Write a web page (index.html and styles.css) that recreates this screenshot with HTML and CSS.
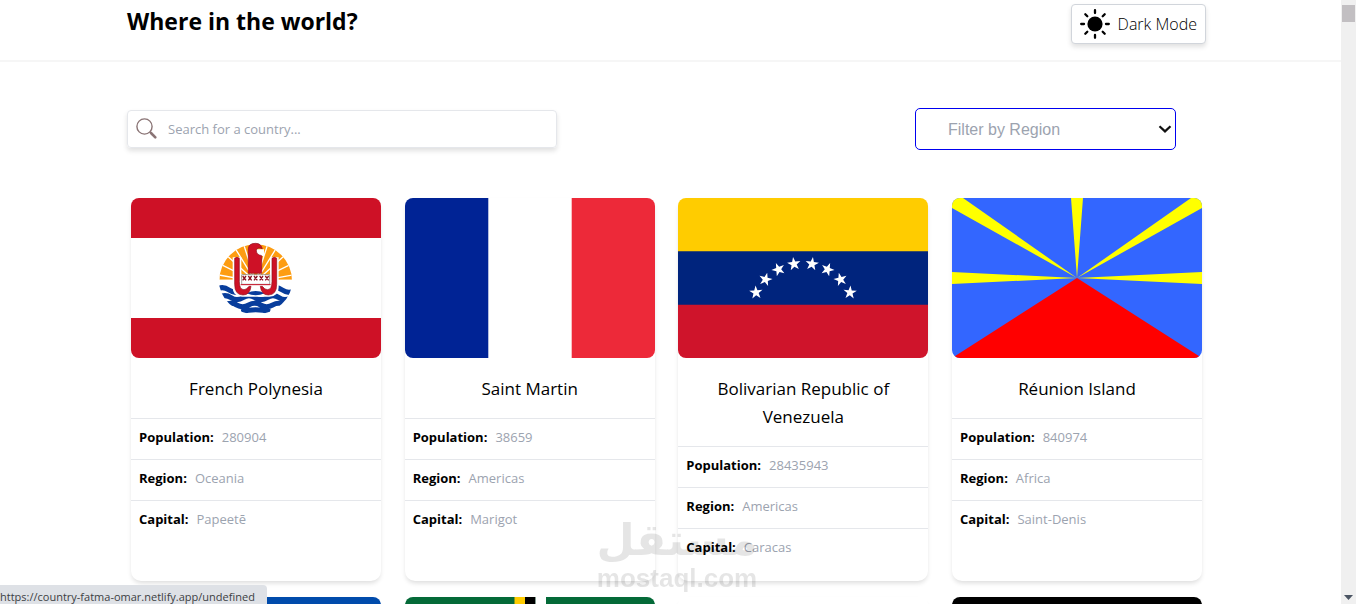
FILE: index.html
```html
<!DOCTYPE html>
<html lang="en">
<head>
    <meta charset="UTF-8">
    <meta name="viewport" content="width=device-width, initial-scale=1.0">
    <title>Where in the world?</title>
    <link rel="stylesheet" href="styles.css">
</head>
<body>
    <div class="page">
        <header class="header">
            <h1 class="header-title">Where in the world?</h1>
            <button class="mode-btn" type="button">
                <svg width="30" height="30" viewBox="0 0 30 30" aria-hidden="true">
                    <circle cx="15" cy="15" r="7.6"/>
                    <path d="M15 1.2v2.8M15 26v2.8M1.2 15H4M26 15h2.8M5.3 5.3l2 2M22.7 22.7l2 2M5.3 24.7l2-2M22.7 7.3l2-2" fill="none" stroke="#000" stroke-width="2.3" stroke-linecap="round"/>
                </svg>
                <span>Dark Mode</span>
            </button>
        </header>

        <main class="main">
            <form class="controls">
                <label class="search">
                    <svg width="22" height="22" viewBox="0 0 22 22" fill="none" stroke="#8a7475" aria-hidden="true">
                        <circle cx="8.5" cy="8.5" r="7.6" stroke-width="1.4"/>
                        <path d="M13.9 13.9l1.3 1.3" stroke-width="1.5"/>
                        <path d="M15 15l4.3 4.3" stroke-width="2.6" stroke-linecap="round"/>
                    </svg>
                    <input type="text" class="search-input" placeholder="Search for a country..." aria-label="Search for a country">
                </label>
                <div class="filter">
                    <select class="filter-select" aria-label="Filter by Region">
                        <option>Filter by Region</option>
                    </select>
                    <svg class="filter-arrow" width="14" height="8" viewBox="0 0 14 8" aria-hidden="true">
                        <path d="M1.5 1.2L7 6.4l5.5-5.2" fill="none" stroke="#111" stroke-width="2.2"/>
                    </svg>
                </div>
            </form>

            <section class="cards">
                <article class="card">
                    <svg class="flag" viewBox="0 0 250 160" preserveAspectRatio="none">
                        <defs>
                            <clipPath id="sunClip"><path d="M58 152a109 109 0 0 1 218 0z"/></clipPath>
                            <clipPath id="seaClip"><path d="M56 148h222a111 105 0 0 1-222 0z"/></clipPath>
                        </defs>
                        <path fill="#fff" d="M0 0h250v160H0z"/>
                        <path fill="#ce1126" d="M0 0h250v40H0zM0 120h250v40H0z"/>
                        <g transform="translate(69 32) scale(.3333)">
                            <g clip-path="url(#sunClip)">
                                <path fill="#fd9d12" d="M50 30h234v125H50z"/>
                                <path stroke="#fff" stroke-width="4" d="M167 155L40 132M167 155L48 96M167 155L62 60M167 155L90 30M167 155L125 25M167 155L209 25M167 155L244 30M167 155L272 60M167 155L286 96M167 155L294 132"/>
                            </g>
                            <g clip-path="url(#seaClip)">
                                <path fill="#fff" d="M50 148h234v110H50z"/>
                                <path fill="none" stroke="#083d9c" stroke-width="15" d="M47 180q20-14 40 0t40 0 40 0 40 0 40 0 40 0M57 203q18-12 36 0t36 0 36 0 36 0 36 0 36 0M74 225q18-10 36 0t36 0 36 0 36 0 36 0M124 245q43-12 86 0"/>
                            </g>
                            <path fill="#fff" d="M98 82h26v72h86V82h26v90q0 28-28 28h-82q-28 0-28-28z"/>
                            <path fill="#083d9c" d="M140 190q27-14 54 0-27 12-54 0z"/>
                            <path fill="#ce1126" stroke="#8c1020" stroke-width="2" d="M104 85q7-6 14 0v70q0 24 14 24 8 0 15-10h6q-3 26-24 26-25 0-25-32zM230 85q-7-6-14 0v70q0 24-14 24-8 0-15-10h-6q3 26 24 26 25 0 25-32z"/>
                            <path fill="#fff" stroke="#777" stroke-width="2" d="M125 134h84v29h-84z"/>
                            <path fill="#fff" d="M166 58h26v20h-26z"/>
                            <path fill="#ce1126" stroke="#8c1020" stroke-width="2" d="M145 130V57q0-17 22-17 16 0 20 16-15-5-18 4-1 14 16 17v53z"/>
                            <path stroke="#8c1020" stroke-width="4" d="M128 138l10 13m0-13l-10 13M145 138l10 13m0-13l-10 13M162 138l10 13m0-13l-10 13M179 138l10 13m0-13l-10 13M196 138l10 13m0-13l-10 13"/>
                            <path stroke="#ce1126" stroke-width="3" d="M122 164h90"/>
                        </g>
                    </svg>
                    <h2 class="card-title">French Polynesia</h2>
                    <p class="card-row"><b>Population:</b><span>280904</span></p>
                    <p class="card-row"><b>Region:</b><span>Oceania</span></p>
                    <p class="card-row"><b>Capital:</b><span>Papeetē</span></p>
                </article>

                <article class="card">
                    <svg class="flag" viewBox="0 0 250 160" preserveAspectRatio="none">
                        <path fill="#fff" d="M0 0h250v160H0z"/>
                        <path fill="#002395" d="M0 0h83.3v160H0z"/>
                        <path fill="#ed2939" d="M166.7 0H250v160h-83.3z"/>
                    </svg>
                    <h2 class="card-title">Saint Martin</h2>
                    <p class="card-row"><b>Population:</b><span>38659</span></p>
                    <p class="card-row"><b>Region:</b><span>Americas</span></p>
                    <p class="card-row"><b>Capital:</b><span>Marigot</span></p>
                </article>

                <article class="card">
                    <svg class="flag" viewBox="0 0 250 160" preserveAspectRatio="none">
                        <defs>
                            <path id="star" fill="#fff" d="M0-7l1.6 4.8h5.1L2.6.8l1.5 4.9L0 2.7l-4.1 3L-2.6.8l-4.1-3h5.1z"/>
                        </defs>
                        <path fill="#fc0" d="M0 0h250v54H0z"/>
                        <path fill="#cf142b" d="M0 106h250v54H0z"/>
                        <path fill="#00247d" d="M0 53.3h250v53.4H0z"/>
                        <use href="#star" transform="translate(78 94.5) rotate(-4)"/>
                        <use href="#star" transform="translate(87.5 81.5) rotate(14)"/>
                        <use href="#star" transform="translate(100.5 71.5) rotate(-22)"/>
                        <use href="#star" transform="translate(116 66) rotate(-8)"/>
                        <use href="#star" transform="translate(134 66) rotate(8)"/>
                        <use href="#star" transform="translate(149.5 71.5) rotate(22)"/>
                        <use href="#star" transform="translate(162.5 81.5) rotate(-14)"/>
                        <use href="#star" transform="translate(172 94.5) rotate(4)"/>
                    </svg>
                    <h2 class="card-title">Bolivarian Republic of Venezuela</h2>
                    <p class="card-row"><b>Population:</b><span>28435943</span></p>
                    <p class="card-row"><b>Region:</b><span>Americas</span></p>
                    <p class="card-row"><b>Capital:</b><span>Caracas</span></p>
                </article>

                <article class="card">
                    <svg class="flag" viewBox="0 0 250 160" preserveAspectRatio="none">
                        <path fill="#36f" d="M0 0h250v160H0z"/>
                        <path fill="#ff0" d="M125 80L0 74v12zM125 80l125-6v12zM125 80L119 0h12zM125 80L0 10V0h11zM125 80l125-70V0h-11z"/>
                        <path fill="red" d="M125 80l125 80H0z"/>
                    </svg>
                    <h2 class="card-title">Réunion Island</h2>
                    <p class="card-row"><b>Population:</b><span>840974</span></p>
                    <p class="card-row"><b>Region:</b><span>Africa</span></p>
                    <p class="card-row"><b>Capital:</b><span>Saint-Denis</span></p>
                </article>

                <article class="card">
                    <svg class="flag" viewBox="0 0 250 160" preserveAspectRatio="none">
                        <path fill="#004bab" d="M0 0h250v160H0z"/>
                    </svg>
                </article>
                <article class="card">
                    <svg class="flag" viewBox="0 0 250 160" preserveAspectRatio="none">
                        <path fill="#046a38" d="M0 0h250v160H0z"/>
                        <path fill="#fc0" d="M109.5 0H120v160h-10.5z"/>
                        <path d="M120 0h10.5v160H120z"/>
                        <path fill="#fff" d="M130.5 0H141v160h-10.5z"/>
                    </svg>
                </article>
                <article class="card">
                    <svg class="flag" viewBox="0 0 250 160" preserveAspectRatio="none">
                        <path fill="#fff" d="M0 0h250v160H0z"/>
                    </svg>
                </article>
                <article class="card">
                    <svg class="flag" viewBox="0 0 250 160" preserveAspectRatio="none">
                        <path d="M0 0h250v160H0z"/>
                    </svg>
                </article>
            </section>
        </main>
    </div>

    <div class="scrollbar">
        <div class="scrollbar-thumb"></div>
        <svg width="9" height="5" viewBox="0 0 9 5"><path fill="#4b5563" d="M0 0h9L4.5 5z"/></svg>
    </div>

    <div class="watermark">
        <span class="watermark-ar" lang="ar">مستقل</span>
        <span class="watermark-en">mostaql.com</span>
    </div>

    <div class="status">https://country-fatma-omar.netlify.app/undefined</div>
</body>
</html>
```

FILE: styles.css
```css
* {
    box-sizing: border-box;
}

body {
    margin: 0;
    background-color: #fff;
    color: #000;
    font-family: "Open Sans", "Noto Sans", sans-serif;
    font-size: 14px;
    line-height: 20px;
}

h1, h2, p {
    margin: 0;
}

.page {
    height: 100vh;
    padding-right: 15px;
    overflow: hidden;
}

/* header */
.header {
    display: flex;
    justify-content: space-between;
    align-items: flex-start;
    padding: 4px 135px 16px 127px;
    border-bottom: 2px solid #f6f6f6;
}

.header-title {
    font-size: 23px;
    line-height: 34px;
    font-weight: 700;
}

.mode-btn {
    display: flex;
    align-items: center;
    gap: 8px;
    height: 40px;
    padding: 0 8px;
    border: 1px solid #d1d5db;
    border-radius: 4px;
    background-color: #fff;
    box-shadow: 0 3px 5px rgba(0, 0, 0, 0.12);
    color: #000;
    font-family: inherit;
    font-size: 16px;
    font-weight: 300;
    cursor: pointer;
}

/* search and filter */
.main {
    padding: 46px 135px 0 127px;
}

.controls {
    display: flex;
    justify-content: space-between;
    align-items: center;
    padding-right: 30px;
}

.search {
    display: flex;
    align-items: center;
    gap: 10px;
    width: 41%;
    height: 38px;
    padding: 0 8px;
    border: 1px solid #e5e7eb;
    border-radius: 4px;
    box-shadow: 0 3px 5px rgba(0, 0, 0, 0.12);
}

.search-input {
    flex: 1;
    min-width: 0;
    padding: 0;
    border: none;
    outline: none;
    background: none;
    font-family: inherit;
    font-size: 13px;
}

.search-input::placeholder {
    color: #9ca3af;
}

.filter {
    position: relative;
}

.filter-select {
    appearance: none;
    width: 261px;
    height: 42px;
    padding: 0 32px;
    border: 1px solid #0000f0;
    border-radius: 5px;
    background-color: #fff;
    color: #9ca3af;
    font-family: "Liberation Sans", Arial, sans-serif;
    font-size: 16px;
}

.filter-arrow {
    position: absolute;
    top: 17px;
    right: 4px;
    pointer-events: none;
}

/* country cards */
.cards {
    display: grid;
    grid-template-columns: repeat(auto-fill, 250px);
    justify-content: space-between;
    row-gap: 16px;
    margin-top: 48px;
    padding: 0 4px;
}

.card {
    padding-bottom: 12px;
    border-radius: 10px;
    box-shadow: 0 3px 5px -1px rgba(0, 0, 0, 0.14);
}

.flag {
    display: block;
    width: 100%;
    height: 160px;
    border-radius: 8px;
}

.card-title {
    padding: 17px 24px 15px;
    font-size: 17px;
    line-height: 28px;
    font-weight: 500;
    text-align: center;
}

.card-row {
    display: flex;
    gap: 8px;
    padding: 8px 8px 12px;
    border-top: 1px solid #e5e7eb;
    font-size: 13px;
}

.card-row span {
    color: #9ca3af;
}

/* window scrollbar */
.scrollbar {
    position: fixed;
    top: 0;
    right: 0;
    bottom: 0;
    display: flex;
    flex-direction: column;
    justify-content: space-between;
    align-items: center;
    width: 15px;
    padding: 5px 0 4px;
    background-color: #f0f0f0;
}

.scrollbar-thumb {
    width: 13px;
    height: 17px;
    background-color: #c2bfc2;
}

/* watermark */
.watermark {
    position: fixed;
    left: 50%;
    bottom: 12px;
    display: flex;
    flex-direction: column;
    align-items: center;
    width: 160px;
    margin-left: -81px;
    color: #000;
    opacity: 0.1;
    font-weight: 700;
    pointer-events: none;
}

.watermark-ar {
    font-family: "DejaVu Sans", sans-serif;
    font-size: 44px;
    line-height: 48px;
}

.watermark-en {
    font-family: "Liberation Sans", Arial, sans-serif;
    font-size: 26px;
    line-height: 28px;
}

/* link preview */
.status {
    position: fixed;
    left: 0;
    bottom: 0;
    height: 19px;
    padding-right: 12px;
    border-top-right-radius: 4px;
    background-color: #dee1e6;
    color: #3c4043;
    font-size: 11px;
    line-height: 24px;
}
```
